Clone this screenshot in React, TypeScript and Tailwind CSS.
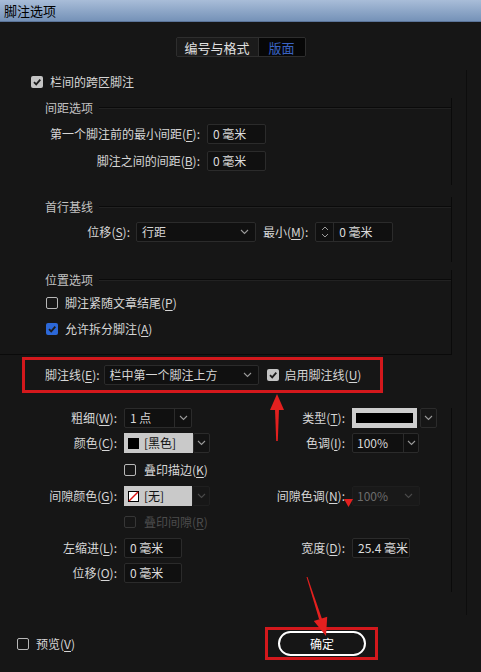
import React from 'react';

const Chev = ({ dim }: { dim?: boolean }) => (
  <svg width="9" height="6" viewBox="0 0 9 6">
    <path d="M1 1l3.5 3.5L8 1" fill="none" stroke={dim ? '#4a4a4a' : '#9a9a9a'} strokeWidth="1.1" />
  </svg>
);

function Mn({ t, k }: { t: string; k: string }) {
  return (
    <>
      {t}(<span className="underline underline-offset-[2px]">{k}</span>):
    </>
  );
}

type BoxKind = 'gray' | 'blue' | 'empty' | 'disabled';

function Box({ kind }: { kind: BoxKind }) {
  if (kind === 'gray' || kind === 'blue') {
    return (
      <div
        className={`w-[12px] h-[12px] rounded-[2px] flex items-center justify-center ${
          kind === 'gray' ? 'bg-[#c4c4c4]' : 'bg-[#2c68d8]'
        }`}
      >
        <svg width="10" height="10" viewBox="0 0 10 10">
          <path d="M2 5.2L4.2 7.4L8.3 2.6" fill="none" stroke="#1c1c1c" strokeWidth="1.8" />
        </svg>
      </div>
    );
  }
  return (
    <div
      className={`w-[12px] h-[12px] rounded-[2px] border ${
        kind === 'empty' ? 'border-[#b8b8b8]' : 'border-[#363636]'
      }`}
    />
  );
}

function Field({ w, v }: { w: string; v: string }) {
  return (
    <div className={`h-[20px] ${w} bg-[#101010] border border-[#2b2b2b] rounded-[2px] flex items-center pl-[5px] text-[#dcdcdc]`}>
      {v}
    </div>
  );
}

function GroupHead({ title }: { title: string }) {
  return (
    <div className="flex items-center h-[20px]">
      <span className="ml-[45px] text-[#c2c2c2]">{title}</span>
      <div className="flex-1 ml-[6px] h-[2px] border-t border-[#0a0a0a] bg-[#222222]" />
    </div>
  );
}

export default function App() {
  return (
    <div className="relative w-[481px] h-[672px] bg-[#161616] overflow-hidden text-[12px] leading-none text-[#d6d6d6] font-['Noto_Sans_CJK_SC','Noto_Sans',sans-serif]">
      {/* Title bar */}
      <div className="h-[22px] bg-gradient-to-b from-[#a9bdd8] to-[#7592b8] border-b border-[#5b7499] flex items-center pl-[4px] text-[13px] text-black">
        脚注选项
      </div>

      {/* Tabs */}
      <div className="mt-[15px] flex justify-center">
        <div className="flex h-[20px] border border-[#2e2e2e] rounded-[2px] overflow-hidden text-[13px]">
          <div className="w-[82px] bg-[#1b1b1b] flex items-center justify-center text-[#e0e0e0] border-r border-[#2e2e2e]">
            编号与格式
          </div>
          <div className="w-[46px] bg-[#070707] flex items-center justify-center text-[#3a63c2]">版面</div>
        </div>
      </div>

      {/* Main frame */}
      <div className="mt-[13px] w-[467px] border-r border-[#0d0d0d]">
        <div className="h-[24px] flex items-center pl-[31px] gap-[7px]">
          <Box kind="gray" />
          <span>栏间的跨区脚注</span>
        </div>

        {/* 间距选项 */}
        <div className="mt-[4px] mr-[14px] border-r border-[#0a0a0a] pb-[14px]">
          <GroupHead title="间距选项" />
          <div className="mt-[6px] flex items-center h-[20px]">
            <div className="w-[200px] text-right">
              <Mn t="第一个脚注前的最小间距" k="F" />
            </div>
            <div className="ml-[7px]">
              <Field w="w-[59px]" v="0 毫米" />
            </div>
          </div>
          <div className="mt-[7px] flex items-center h-[20px]">
            <div className="w-[200px] text-right">
              <Mn t="脚注之间的间距" k="B" />
            </div>
            <div className="ml-[7px]">
              <Field w="w-[59px]" v="0 毫米" />
            </div>
          </div>
        </div>

        {/* 首行基线 */}
        <div className="mt-[12px] mr-[14px] border-r border-[#0a0a0a] pb-[20px]">
          <GroupHead title="首行基线" />
          <div className="mt-[5px] flex items-center h-[20px]">
            <div className="w-[130px] text-right">
              <Mn t="位移" k="S" />
            </div>
            <div className="ml-[6px] w-[120px] h-[20px] bg-[#101010] border border-[#2b2b2b] rounded-[2px] flex items-center justify-between pl-[5px] pr-[6px]">
              <span>行距</span>
              <Chev />
            </div>
            <div className="ml-[7px]">
              <Mn t="最小" k="M" />
            </div>
            <div className="ml-[7px] flex h-[20px] border border-[#2b2b2b] rounded-[2px] bg-[#101010]">
              <div className="w-[18px] border-r border-[#2b2b2b] flex items-center justify-center">
                <svg width="8" height="14" viewBox="0 0 8 14">
                  <path d="M1 5l3-3 3 3M1 9l3 3 3-3" fill="none" stroke="#9a9a9a" strokeWidth="1" />
                </svg>
              </div>
              <div className="w-[58px] flex items-center pl-[5px] text-[#dcdcdc]">0 毫米</div>
            </div>
          </div>
        </div>

        {/* 位置选项 */}
        <div className="mt-[8px] mr-[14px] border-r border-b border-[#0a0a0a] pb-[15px]">
          <GroupHead title="位置选项" />
          <div className="mt-[3px] h-[20px] flex items-center pl-[46px] gap-[7px]">
            <Box kind="empty" />
            <span>
              脚注紧随文章结尾(<span className="underline underline-offset-[2px]">P</span>)
            </span>
          </div>
          <div className="mt-[6px] h-[20px] flex items-center pl-[46px] gap-[7px]">
            <Box kind="blue" />
            <span>
              允许拆分脚注(<span className="underline underline-offset-[2px]">A</span>)
            </span>
          </div>
        </div>

        {/* Highlighted footnote rule row */}
        <div className="mt-[2px] ml-[22px] w-[361px] h-[36px] border-[3px] border-[#d3181c] flex items-center pl-[20px]">
          <Mn t="脚注线" k="E" />
          <div className="ml-[4px] w-[155px] h-[20px] bg-[#101010] border border-[#2b2b2b] rounded-[2px] flex items-center justify-between pl-[5px] pr-[6px]">
            <span>栏中第一个脚注上方</span>
            <Chev />
          </div>
          <div className="ml-[8px]">
            <Box kind="gray" />
          </div>
          <span className="ml-[6px]">
            启用脚注线(<span className="underline underline-offset-[2px]">U</span>)
          </span>
        </div>

        {/* Rule settings */}
        <div className="mt-[15px] mr-[14px] border-r border-[#0a0a0a] pb-[9px]">
          {/* 粗细 / 类型 */}
          <div className="h-[20px] flex items-center">
            <div className="w-[117px] text-right">
              <Mn t="粗细" k="W" />
            </div>
            <div className="ml-[7px] w-[150px]">
              <div className="w-[68px] h-[20px] flex bg-[#101010] border border-[#2b2b2b] rounded-[2px]">
                <div className="w-[50px] flex items-center pl-[5px] border-r border-[#2b2b2b]">1 点</div>
                <div className="flex-1 flex items-center justify-center">
                  <Chev />
                </div>
              </div>
            </div>
            <div className="w-[71px] text-right">
              <Mn t="类型" k="T" />
            </div>
            <div className="ml-[7px] flex items-center gap-[3px]">
              <div className="w-[65px] h-[20px] bg-[#cdcdcd] flex items-center px-[4px]">
                <div className="w-full h-[10px] bg-black" />
              </div>
              <div className="w-[17px] h-[20px] border border-[#2b2b2b] rounded-[2px] flex items-center justify-center">
                <Chev />
              </div>
            </div>
          </div>

          {/* 颜色 / 色调 */}
          <div className="mt-[5px] h-[20px] flex items-center">
            <div className="w-[117px] text-right">
              <Mn t="颜色" k="C" />
            </div>
            <div className="ml-[7px] w-[150px] flex">
              <div className="w-[69px] h-[20px] bg-[#c9c9c9] flex items-center pl-[4px] gap-[5px] text-[#111]">
                <div className="w-[11px] h-[11px] bg-black" />
                <span>[黑色]</span>
              </div>
              <div className="w-[17px] h-[20px] bg-[#131313] border border-[#2b2b2b] rounded-[2px] flex items-center justify-center">
                <Chev />
              </div>
            </div>
            <div className="w-[71px] text-right">
              <Mn t="色调" k="I" />
            </div>
            <div className="ml-[7px] w-[67px] h-[20px] flex bg-[#101010] border border-[#2b2b2b] rounded-[2px]">
              <div className="w-[51px] flex items-center pl-[4px] border-r border-[#2b2b2b]">100%</div>
              <div className="flex-1 flex items-center justify-center">
                <Chev />
              </div>
            </div>
          </div>

          {/* 叠印描边 */}
          <div className="mt-[7px] h-[20px] flex items-center pl-[124px] gap-[8px]">
            <Box kind="empty" />
            <span>
              叠印描边(<span className="underline underline-offset-[2px]">K</span>)
            </span>
          </div>

          {/* 间隙颜色 / 间隙色调 */}
          <div className="mt-[6px] h-[20px] flex items-center">
            <div className="w-[117px] text-right">
              <Mn t="间隙颜色" k="G" />
            </div>
            <div className="ml-[7px] w-[150px] flex">
              <div className="w-[68px] h-[20px] bg-[#c9c9c9] flex items-center pl-[4px] gap-[5px] text-[#111]">
                <svg width="11" height="11" viewBox="0 0 11 11">
                  <rect x="0.5" y="0.5" width="10" height="10" fill="#fff" stroke="#000" />
                  <path d="M1 10L10 1" stroke="#d11" strokeWidth="1.4" />
                </svg>
                <span>[无]</span>
              </div>
              <div className="w-[18px] h-[20px] bg-[#171717] border border-[#1f1f1f] rounded-[2px] flex items-center justify-center">
                <Chev dim />
              </div>
            </div>
            <div className="w-[71px] text-right">
              <Mn t="间隙色调" k="N" />
            </div>
            <div className="ml-[7px] w-[68px] h-[20px] flex items-center justify-between bg-[#191919] border border-[#1e1e1e] rounded-[2px] pl-[4px] pr-[6px] text-[#6c6c6c]">
              <span>100%</span>
              <Chev dim />
            </div>
          </div>

          {/* 叠印间隙 */}
          <div className="mt-[6px] h-[20px] flex items-center pl-[124px] gap-[8px] text-[#4c4c4c]">
            <Box kind="disabled" />
            <span>
              叠印间隙(<span className="underline underline-offset-[2px]">R</span>)
            </span>
          </div>

          {/* 左缩进 / 宽度 */}
          <div className="mt-[6px] h-[20px] flex items-center">
            <div className="w-[117px] text-right">
              <Mn t="左缩进" k="L" />
            </div>
            <div className="ml-[7px] w-[150px]">
              <Field w="w-[58px]" v="0 毫米" />
            </div>
            <div className="w-[71px] text-right">
              <Mn t="宽度" k="D" />
            </div>
            <div className="ml-[7px]">
              <Field w="w-[58px]" v="25.4 毫米" />
            </div>
          </div>

          {/* 位移 */}
          <div className="mt-[5px] h-[20px] flex items-center">
            <div className="w-[117px] text-right">
              <Mn t="位移" k="O" />
            </div>
            <div className="ml-[7px]">
              <Field w="w-[58px]" v="0 毫米" />
            </div>
          </div>
        </div>
        <div className="h-[23px]" />
      </div>

      {/* Bottom bar */}
      <div className="mt-[12px] h-[33px] flex items-center">
        <div className="w-[265px] flex items-center pl-[17px] gap-[7px]">
          <Box kind="empty" />
          <span>
            预览(<span className="underline underline-offset-[2px]">V</span>)
          </span>
        </div>
        <div className="w-[113px] h-[33px] border-[3px] border-[#d3181c] flex items-center pl-[10px]">
          <button className="w-[88px] h-[25px] rounded-full border-2 border-white text-white text-[12px] flex items-center justify-center">
            确定
          </button>
        </div>
      </div>

      {/* Annotation arrows */}
      <svg className="absolute left-[268px] top-[394px]" width="18" height="47" viewBox="0 0 18 47">
        <polygon points="9,0 2,16 16,16" fill="#e3201f" />
        <polygon points="7,15 11,15 9.8,47 8.2,47" fill="#e3201f" />
      </svg>
      <svg className="absolute left-[344px] top-[499px]" width="9" height="8" viewBox="0 0 9 8">
        <polygon points="0,0 9,0 4.5,8" fill="#e3201f" />
      </svg>
      <svg className="absolute left-[300px] top-[575px]" width="35" height="63" viewBox="0 0 35 63">
        <polygon points="6.5,2 7.5,2 22,44 19,44" fill="#e3201f" />
        <polygon points="26,61 27.2,41.8 13.8,46" fill="#e3201f" />
      </svg>
    </div>
  );
}
